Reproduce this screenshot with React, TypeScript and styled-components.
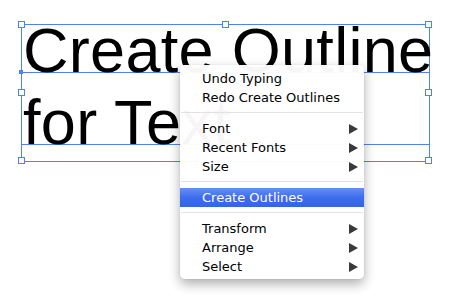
import { createGlobalStyle, styled } from 'styled-components';

const GlobalStyle = createGlobalStyle`
  html, body {
    margin: 0;
    padding: 0;
    background: #ffffff;
  }
`;

const Canvas = styled.div`
  position: relative;
  width: 450px;
  height: 308px;
  overflow: hidden;
  background: #ffffff;
  padding: 24px 0 0 21px;
  box-sizing: border-box;
`;

const Frame = styled.div`
  position: relative;
  width: 409px;
  height: 138px;
  border: 1px solid #4f80f6;
  box-sizing: border-box;
  display: flex;
  flex-direction: column;
`;

const Line = styled.div<{ $height: number }>`
  height: ${(p) => p.$height}px;
  flex-shrink: 0;
  display: flex;
  align-items: flex-end;
  border-bottom: 1px solid #4f80f6;
  box-sizing: border-box;
  white-space: nowrap;
`;

const BigText = styled.span`
  font-family: 'Liberation Sans', Arial, sans-serif;
  font-size: 63px;
  line-height: 63px;
  color: #000;
  margin-bottom: -10px;
  margin-left: 1px;
  letter-spacing: 0.3px;
`;

// selection handles sit on top of the frame border
const Handle = styled.span<{ $x: string; $y: string }>`
  position: absolute;
  left: ${(p) => p.$x};
  top: ${(p) => p.$y};
  width: 5px;
  height: 5px;
  margin: -4px 0 0 -4px;
  background: #fff;
  border: 1px solid #4f80f6;
`;

const Anchor = styled.span`
  position: absolute;
  left: -3px;
  top: 45px;
  width: 4px;
  height: 4px;
  background: #4f80f6;
`;

const Menu = styled.div`
  position: absolute;
  left: 180px;
  top: 65px;
  width: 184px;
  padding: 4px 0 3px;
  box-sizing: border-box;
  background: rgba(255, 255, 255, 0.965);
  border-radius: 4px 4px 5px 5px;
  box-shadow: 0 5px 12px rgba(0, 0, 0, 0.32), 0 0 1px rgba(0, 0, 0, 0.25);
  font-family: 'DejaVu Sans', 'Lucida Grande', sans-serif;
  font-size: 13px;
  color: #000;
`;

const Item = styled.div<{ $active?: boolean }>`
  height: 19px;
  display: flex;
  align-items: center;
  justify-content: space-between;
  padding: 0 6px 0 22px;
  color: ${(p) => (p.$active ? '#fff' : '#000')};
  background: ${(p) => (p.$active ? 'linear-gradient(#6690f3, #3f6cee 50%, #3463ec)' : 'transparent')};
`;

const Separator = styled.div`
  height: 1px;
  margin: 5px 1px 6px;
  background: #e2e2e2;
`;

const Arrow = styled.span`
  width: 0;
  height: 0;
  border-top: 5px solid transparent;
  border-bottom: 5px solid transparent;
  border-left: 9px solid #3a3a3a;
`;

type Entry = { label: string; sub?: boolean; active?: boolean } | 'sep';

const entries: Entry[] = [
  { label: 'Undo Typing' },
  { label: 'Redo Create Outlines' },
  'sep',
  { label: 'Font', sub: true },
  { label: 'Recent Fonts', sub: true },
  { label: 'Size', sub: true },
  'sep',
  { label: 'Create Outlines', active: true },
  'sep',
  { label: 'Transform', sub: true },
  { label: 'Arrange', sub: true },
  { label: 'Select', sub: true },
];

export default function App() {
  return (
    <>
      <GlobalStyle />
      <Canvas>
        <Frame>
          <Line $height={48}>
            <BigText>Create Outline</BigText>
          </Line>
          <Line $height={72}>
            <BigText>for Text</BigText>
          </Line>
          <Handle $x='0px' $y='0px' />
          <Handle $x='50%' $y='0px' />
          <Handle $x='100%' $y='0px' />
          <Handle $x='0px' $y='50%' />
          <Handle $x='100%' $y='50%' />
          <Handle $x='0px' $y='100%' />
          <Handle $x='50%' $y='100%' />
          <Handle $x='100%' $y='100%' />
          <Anchor />
        </Frame>
        <Menu>
          {entries.map((e, i) =>
            e === 'sep' ? (
              <Separator key={i} />
            ) : (
              <Item key={i} $active={e.active}>
                <span>{e.label}</span>
                {e.sub && <Arrow />}
              </Item>
            )
          )}
        </Menu>
      </Canvas>
    </>
  );
}
